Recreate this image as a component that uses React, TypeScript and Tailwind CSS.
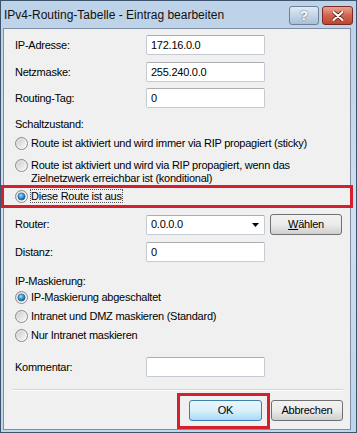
import type { ReactNode } from "react";

const font = { fontFamily: '"Liberation Sans", Arial, sans-serif' };

const Radio = ({ checked }: { checked?: boolean }) => (
  <svg width="13" height="13" viewBox="0 0 13 13" className="shrink-0">
    <defs>
      <linearGradient id="rOuter" x1="0" y1="0" x2="1" y2="1">
        <stop offset="0" stopColor="#d8d8d8" />
        <stop offset="1" stopColor="#ffffff" />
      </linearGradient>
      <linearGradient id="rInner" x1="0" y1="0" x2="1" y2="1">
        <stop offset="0" stopColor="#cfcfcf" />
        <stop offset="1" stopColor="#f6f6f6" />
      </linearGradient>
      <radialGradient id="rDot" cx="0.4" cy="0.35" r="0.7">
        <stop offset="0" stopColor="#a8e0fb" />
        <stop offset="0.45" stopColor="#3d9fdc" />
        <stop offset="1" stopColor="#0f4c7f" />
      </radialGradient>
    </defs>
    <circle cx="6.5" cy="6.5" r="6" fill="url(#rOuter)" stroke="#8b8b8b" strokeWidth="1" />
    {checked ? (
      <circle cx="6.5" cy="6.5" r="3.6" fill="url(#rDot)" stroke="#1d5b8c" strokeWidth="0.6" />
    ) : (
      <circle cx="6.5" cy="6.5" r="4.2" fill="url(#rInner)" />
    )}
  </svg>
);

const Input = ({ value, combo }: { value: string; combo?: boolean }) => (
  <div className="w-[119px] h-[20px] shrink-0 bg-white border border-[#c5cbd3] border-t-[#abadb3] rounded-[2px] flex items-center pl-[4px] pr-[5px]">
    <span className="flex-1">{value}</span>
    {combo && (
      <svg width="7" height="4" viewBox="0 0 7 4">
        <path d="M0 0 L7 0 L3.5 4 Z" fill="#000" />
      </svg>
    )}
  </div>
);

const Field = ({ label, children, className }: { label: string; children: ReactNode; className?: string }) => (
  <div className={`flex items-center ${className ?? ""}`}>
    <div className="w-[131px] shrink-0">{label}</div>
    {children}
  </div>
);

const Btn = ({ children, primary, className }: { children: ReactNode; primary?: boolean; className?: string }) => (
  <div
    className={`h-[21px] shrink-0 rounded-[3px] border flex items-center justify-center ${
      primary
        ? "w-[73px] border-[#3c7fb1] bg-gradient-to-b from-[#eaf6fd] via-[#d9f0fc] to-[#a7d9f5]"
        : "w-[72px] border-[#707070] bg-gradient-to-b from-[#f2f2f2] via-[#ebebeb] to-[#cfcfcf]"
    } ${className ?? ""}`}
  >
    {children}
  </div>
);

const RadioRow = ({ checked, children, className }: { checked?: boolean; children: ReactNode; className?: string }) => (
  <div className={`flex items-start gap-[3px] leading-[13px] ${className ?? ""}`}>
    <Radio checked={checked} />
    <div className="whitespace-nowrap">{children}</div>
  </div>
);

export default function App() {
  return (
    <div
      style={font}
      className="w-[357px] h-[433px] flex flex-col border border-[#3e546c] bg-gradient-to-b from-[#bcd2e8] via-[#cfe0f1] to-[#bcd6ea] text-black overflow-hidden"
    >
      <div className="h-[27px] shrink-0 flex items-start justify-between pl-[3px] pr-[3px] pt-[4px]">
        <div className="text-[12px] leading-[20px] text-[#111]">IPv4-Routing-Tabelle - Eintrag bearbeiten</div>
        <div className="flex gap-[3px] pt-[1px]">
          <div className="w-[30px] h-[19px] rounded-[3px] border border-[#6d7f95] bg-gradient-to-b from-[#dfe9f4] via-[#c4d5e7] to-[#a9bfd6] flex items-center justify-center text-white text-[13px] font-bold leading-none [text-shadow:0_0_2px_#3d5570]">
            ?
          </div>
          <div className="w-[31px] h-[19px] rounded-[3px] border border-[#7a2a22] bg-gradient-to-b from-[#e8a493] via-[#d0644f] to-[#c0442f] flex items-center justify-center">
            <svg width="12" height="10" viewBox="0 0 12 10">
              <path d="M1.5 1 L10.5 9 M10.5 1 L1.5 9" stroke="#5a1a12" strokeWidth="3.6" strokeLinecap="round" />
              <path d="M1.5 1 L10.5 9 M10.5 1 L1.5 9" stroke="#fff" strokeWidth="2.2" strokeLinecap="round" />
            </svg>
          </div>
        </div>
      </div>

      <div className="flex-1 ml-[2px] mr-[5px] mb-[4px] bg-[#f0f0f0] border border-[#7e8fa3] flex flex-col pl-[11px] pr-[7px] text-[11px] tracking-[-0.25px]">
        <Field label="IP-Adresse:" className="mt-[6px]">
          <Input value="172.16.0.0" />
        </Field>
        <Field label="Netzmaske:" className="mt-[7px]">
          <Input value="255.240.0.0" />
        </Field>
        <Field label="Routing-Tag:" className="mt-[6px]">
          <Input value="0" />
        </Field>

        <div className="mt-[8px] leading-[16px]">Schaltzustand:</div>
        <RadioRow className="mt-[5px]">Route ist aktiviert und wird immer via RIP propagiert (sticky)</RadioRow>
        <RadioRow className="mt-[9px]">
          Route ist aktiviert und wird via RIP propagiert, wenn das
          <br />
          Zielnetzwerk erreichbar ist (konditional)
        </RadioRow>
        <div className="mt-[0px] -ml-[14px] -mr-[10px] h-[23px] shrink-0 border-[3px] border-[#d4202c] flex items-center pl-[11px]">
          <RadioRow checked>
            <span className="outline-1 outline-dotted outline-[#555]">Diese Route ist aus</span>
          </RadioRow>
        </div>

        <Field label="Router:" className="mt-[6px]">
          <Input value="0.0.0.0" combo />
          <Btn className="ml-[5px]">
            <span>
              <span className="underline">W</span>ählen
            </span>
          </Btn>
        </Field>
        <Field label="Distanz:" className="mt-[7px]">
          <Input value="0" />
        </Field>

        <div className="mt-[11px] leading-[16px]">IP-Maskierung:</div>
        <RadioRow checked className="mt-[2px]">IP-Maskierung abgeschaltet</RadioRow>
        <RadioRow className="mt-[6px]">Intranet und DMZ maskieren (Standard)</RadioRow>
        <RadioRow className="mt-[6px]">Nur Intranet maskieren</RadioRow>

        <Field label="Kommentar:" className="mt-[15px]">
          <Input value="" />
        </Field>

        <div className="mt-[12px] ml-[-2px] h-[1px] shrink-0 bg-[#d0d5da] border-b border-white box-content" />

        <div className="mt-[2px] flex justify-end items-start">
          <div className="border-[3px] border-[#d4202c] pl-[9px] pr-[5px] pt-[4px] pb-[5px]">
            <Btn primary>OK</Btn>
          </div>
          <Btn className="ml-[1px] mt-[7px]">Abbrechen</Btn>
        </div>
      </div>
    </div>
  );
}
